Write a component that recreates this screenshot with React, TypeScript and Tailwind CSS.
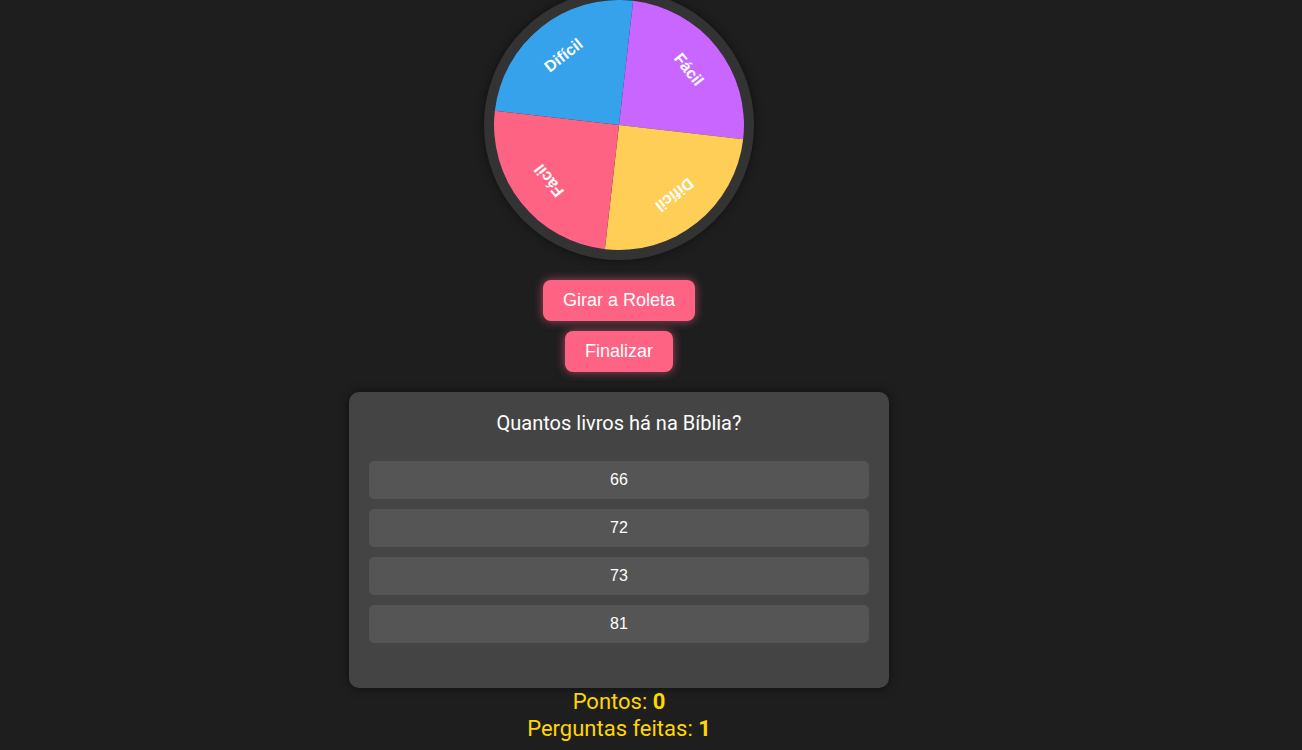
import React from "react";

function Wheel() {
  const r = 88;
  const labels = [
    { t: "Difícil", a: -45 },
    { t: "Fácil", a: 45 },
    { t: "Difícil", a: 135 },
    { t: "Fácil", a: 225 },
  ];
  return (
    <div className="mt-[-10px] rounded-full border-[10px] border-[#333333] shadow-[0_0_10px_rgba(0,0,0,0.5)] w-[270px] h-[270px]">
      <svg width="250" height="250" viewBox="0 0 250 250" className="block">
        <g transform="rotate(6.5 125 125)">
          <path d="M125,125 L0,125 A125,125 0 0 1 125,0 Z" fill="#36A2EB" />
          <path d="M125,125 L125,0 A125,125 0 0 1 250,125 Z" fill="#C966FF" />
          <path d="M125,125 L250,125 A125,125 0 0 1 125,250 Z" fill="#FFCE56" />
          <path d="M125,125 L125,250 A125,125 0 0 1 0,125 Z" fill="#FF6384" />
          {labels.map((l, i) => {
            const rad = (l.a * Math.PI) / 180;
            const x = 125 + r * Math.sin(rad);
            const y = 125 - r * Math.cos(rad);
            return (
              <text
                key={i}
                x={x}
                y={y}
                transform={`rotate(${l.a} ${x} ${y})`}
                textAnchor="middle"
                dominantBaseline="middle"
                fill="#ffffff"
                fontSize="16"
                fontWeight="bold"
                fontFamily="'Liberation Sans', Arial, sans-serif"
              >
                {l.t}
              </text>
            );
          })}
        </g>
      </svg>
    </div>
  );
}

export default function App() {
  const options = ["66", "72", "73", "81"];
  return (
    <div className="min-h-[750px] w-full bg-[#1e1e1e] flex flex-col items-center overflow-hidden pr-[64px]">
      <Wheel />
      <button className="mt-[20px] bg-[#FF6384] text-white text-[18px] leading-[21px] px-[20px] py-[10px] rounded-[8px] shadow-[0_0_10px_rgba(255,99,132,0.6)] font-['Liberation_Sans',Arial,sans-serif]">
        Girar a Roleta
      </button>
      <button className="mt-[10px] bg-[#FF6384] text-white text-[18px] leading-[21px] px-[20px] py-[10px] rounded-[8px] shadow-[0_0_10px_rgba(255,99,132,0.6)] font-['Liberation_Sans',Arial,sans-serif]">
        Finalizar
      </button>
      <div className="mt-[20px] w-[540px] h-[296px] bg-[#444444] rounded-[10px] p-[20px] shadow-[0_0_10px_rgba(0,0,0,0.5)] flex flex-col">
        <h2 className="text-center text-white text-[20px] leading-[23px] font-['Roboto',sans-serif] mb-[26px]">
          Quantos livros há na Bíblia?
        </h2>
        <div className="flex flex-col gap-[10px]">
          {options.map((o) => (
            <button
              key={o}
              className="h-[38px] w-full bg-[#555555] rounded-[5px] text-white text-[16px] font-['Liberation_Sans',Arial,sans-serif]"
            >
              {o}
            </button>
          ))}
        </div>
      </div>
      <div className="text-[#FFD700] text-[22px] leading-[27px] font-['Roboto',sans-serif] text-center">
        <div>
          Pontos: <span className="font-bold">0</span>
        </div>
        <div>
          Perguntas feitas: <span className="font-bold">1</span>
        </div>
      </div>
    </div>
  );
}
